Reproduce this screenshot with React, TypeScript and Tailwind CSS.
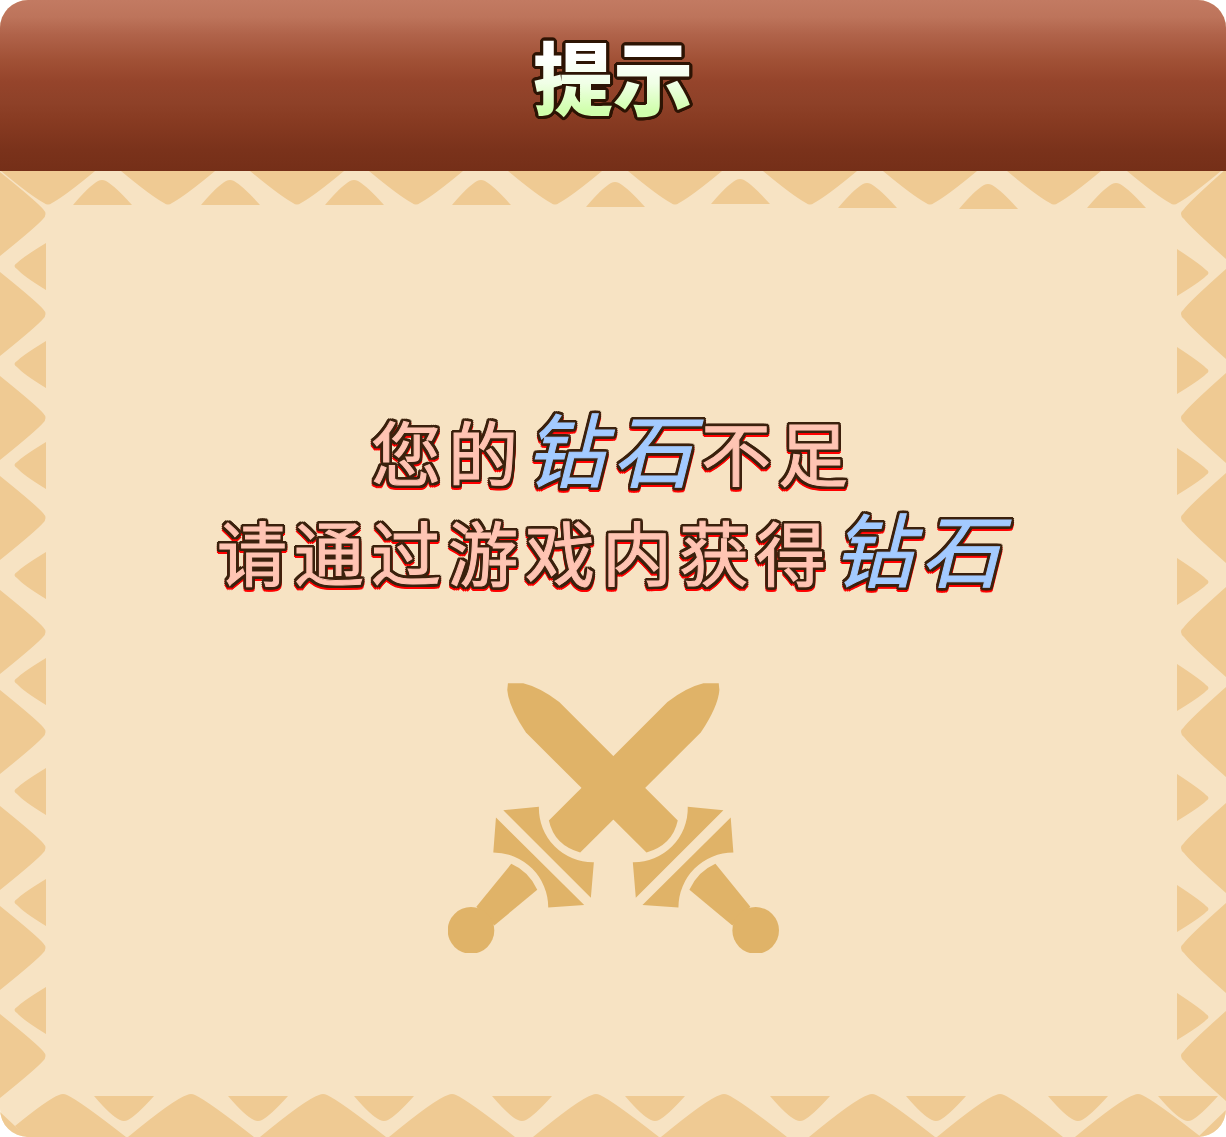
import type { ReactNode } from "react";

type Point = [number, number];

const TOP_LARGE: Point[] = [
  [48, 0], [168, 0], [297, 0], [416, 0], [555, 0],
  [675, 0], [810, 0], [930, 0], [1054, 0], [1174, 0],
];
const TOP_SMALL: Point[] = [
  [102, 34], [230, 34], [354, 34], [481, 34], [615, 36],
  [740, 33], [867, 37], [988, 38], [1116, 37],
];
const SIDE_LARGE = [43, 143, 247, 347, 461, 561, 677, 777, 885];
const LEFT_SMALL = [95, 193, 294, 404, 510, 620, 731, 839];
const RIGHT_SMALL = [102, 200, 301, 411, 517, 627, 738, 846];
const BOTTOM_LARGE = [63, 191, 323, 452, 596, 724, 872, 1000, 1138];
const BOTTOM_SMALL = [124, 258, 384, 522, 655, 800, 936, 1078, 1188];

function Frame() {
  return (
    <svg
      aria-hidden="true"
      viewBox="0 0 1226 966"
      preserveAspectRatio="none"
      className="absolute inset-0 h-full w-full fill-[#efca93]"
    >
      {TOP_LARGE.map(([x, y]) => (
        <path key={x} transform={`translate(${x} ${y})`} d="M-47 0Q-17 25-4 32Q0 35 4 32Q17 25 47 0Z" />
      ))}
      {TOP_SMALL.map(([x, y]) => (
        <path key={x} transform={`translate(${x} ${y})`} d="M-29 0Q-13-19-4-24Q0-26 4-24Q13-19 30 0Z" />
      ))}
      {SIDE_LARGE.map((y) => (
        <path key={y} transform={`translate(0 ${y})`} d="M0-42Q36-13 43-5Q48 0 43 5Q36 13 0 42Z" />
      ))}
      {SIDE_LARGE.map((y) => (
        <path key={y} transform={`translate(1226 ${y})`} d="M0-45Q-36-13-42-5Q-48 0-42 5Q-36 13 0 45Z" />
      ))}
      {LEFT_SMALL.map((y) => (
        <path key={y} transform={`translate(46 ${y})`} d="M0-23Q-23-9-29-3Q-34 0-29 3Q-23 10 0 24Z" />
      ))}
      {RIGHT_SMALL.map((y) => (
        <path key={y} transform={`translate(1177 ${y})`} d="M0-24Q23-9 29-3Q34 0 29 3Q23 9 0 23Z" />
      ))}
      {BOTTOM_LARGE.map((x) => (
        <path key={x} transform={`translate(${x} 966)`} d={x === 63 ? "M-48-11Q-15-38-4-42Q0-44 4-42Q17-36 63 0H-36Z" : "M-63 0Q-17-38-4-42Q0-44 4-42Q17-36 63 0Z"} />
      ))}
      {BOTTOM_SMALL.map((x) => (
        <path key={x} transform={`translate(${x} 925)`} d="M-30 0H30Q13 19 4 24Q0 26-4 24Q-13 20-30 0Z" />
      ))}
      <path d="M0 941L15 955L28 966H0Z" />
      <path d="M1198 966L1226 939V966Z" />
    </svg>
  );
}

function Sword() {
  return (
    <>
      <path d="M234 40H280Q330 52 388 96L744 452Q728 526 650 548L288 188Q236 110 232 60Z" />
      <path d="M774 411L881 421L618 684L609 577A162 162 0 0 0 774 411Z" />
      <path d="M903 443L911 548A165 165 0 0 0 746 713L638 706Z" />
      <path d="M857 582L962 711L908 767L779 660Q804 605 857 582Z" />
      <circle cx="978" cy="782" r="70" />
    </>
  );
}

function CrossedSwords() {
  return (
    <svg aria-hidden="true" viewBox="54 39 994 813" className="w-[331px] fill-[#e0b368]">
      <Sword />
      <g transform="translate(1101 0) scale(-1 1)">
        <Sword />
      </g>
    </svg>
  );
}

function Gem({ children }: { children: ReactNode }) {
  return <em className="text-[80px] leading-none tracking-widest text-[#a3caff]">{children}</em>;
}

export default function App() {
  return (
    <main
      lang="zh-CN"
      className="flex min-h-screen flex-col overflow-hidden rounded-[28px] bg-[#f7e3c3] font-['Noto_Sans_CJK_SC',sans-serif]"
    >
      <header className="bg-[linear-gradient(#c27a62_0%,#bd745b_10%,#b0634a_20%,#a15136_35%,#95442b_48%,#8e4128_60%,#883b22_70%,#7a321b_88%,#752f18_100%)] pt-8 pb-[55px] text-center">
        <h1 className="text-[80px] leading-[84px] font-black [filter:drop-shadow(1px_0_#2d1404)_drop-shadow(-1px_0_#2d1404)_drop-shadow(0_1px_#2d1404)_drop-shadow(0_-1px_#2d1404)_drop-shadow(1px_1px_#2d1404)_drop-shadow(-1px_-1px_#2d1404)_drop-shadow(1px_-1px_#2d1404)_drop-shadow(-1px_1px_#2d1404)]">
          <span className="bg-[linear-gradient(#ffffff_35%,#f0ffe6_58%,#d0ffac_82%)] bg-clip-text text-transparent">
            提示
          </span>
        </h1>
      </header>
      <section className="relative flex flex-1 flex-col items-center justify-center gap-[82px] pt-[46px]">
        <Frame />
        <p className="relative text-center text-[70px] leading-[100px] font-normal tracking-widest text-[#ffc4b3] [-webkit-text-stroke:1px_currentColor] [filter:drop-shadow(0_2px_#ff0000)] [text-shadow:3px_0_#3b210d,-3px_0_#3b210d,0_3px_#3b210d,0_-3px_#3b210d,3px_2px_#3b210d,-3px_2px_#3b210d,3px_-2px_#3b210d,-3px_-2px_#3b210d,2px_3px_#3b210d,-2px_3px_#3b210d,2px_-3px_#3b210d,-2px_-3px_#3b210d]">
          您的<Gem>钻石</Gem>不足
          <br />
          请通过游戏内获得<Gem>钻石</Gem>
        </p>
        <div className="relative">
          <CrossedSwords />
        </div>
      </section>
    </main>
  );
}
